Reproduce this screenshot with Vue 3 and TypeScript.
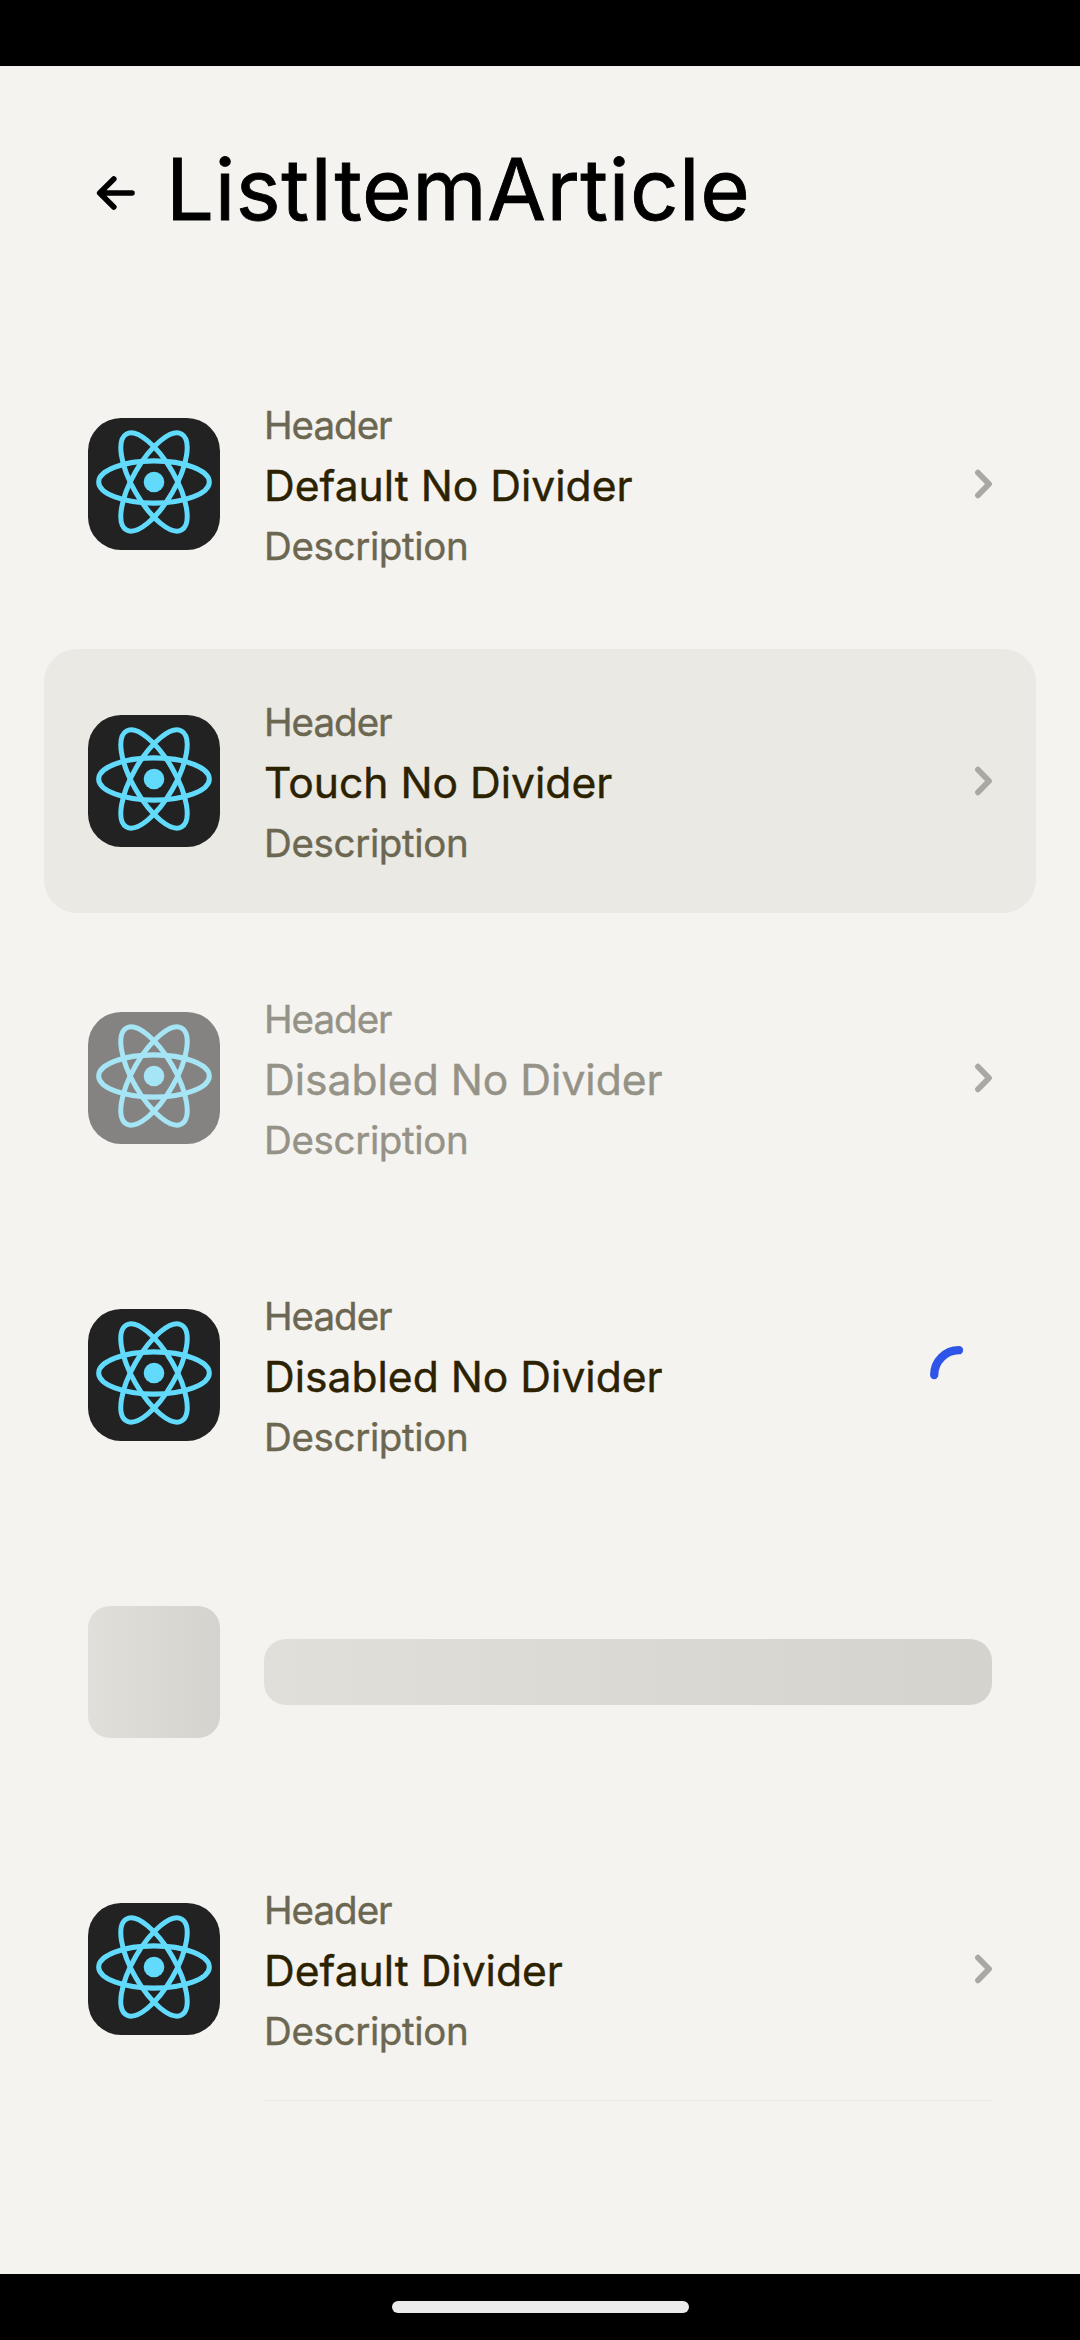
<script setup lang="ts">
type Trailing = 'chevron' | 'spinner'

interface Article {
  title: string
  kind: string
  trailing: Trailing
}

interface Skeleton {
  kind: 'skeleton'
}

const header = 'Header'
const description = 'Description'

const items: (Article | Skeleton)[] = [
  { title: 'Default No Divider', kind: 'default', trailing: 'chevron' },
  { title: 'Touch No Divider', kind: 'touch', trailing: 'chevron' },
  { title: 'Disabled No Divider', kind: 'disabled', trailing: 'chevron' },
  { title: 'Disabled No Divider', kind: 'default', trailing: 'spinner' },
  { kind: 'skeleton' },
  { title: 'Default Divider', kind: 'divided', trailing: 'chevron' },
]
</script>

<template>
  <div class="screen">
    <div class="status-bar"></div>
    <header class="top">
      <svg class="back" viewBox="0 0 66 66" width="66" height="66">
        <path d="M49 33H17M30.8 18.9L16.7 33L30.8 47.1" />
      </svg>
      <h1>ListItemArticle</h1>
    </header>
    <main class="list">
      <section v-for="(item, i) in items" :key="i" class="item" :class="item.kind">
        <template v-if="'title' in item">
          <div class="thumb">
            <svg viewBox="0 0 132 132" width="132" height="132">
              <g transform="translate(66 64) scale(5.03)">
                <circle r="2.05" fill="#61dafb" />
                <g fill="none" stroke="#61dafb">
                  <ellipse rx="11" ry="4.2" />
                  <ellipse rx="11" ry="4.2" transform="rotate(60)" />
                  <ellipse rx="11" ry="4.2" transform="rotate(120)" />
                </g>
              </g>
            </svg>
          </div>
          <div class="texts">
            <span class="small head">{{ header }}</span>
            <span class="title">{{ item.title }}</span>
            <span class="small desc">{{ description }}</span>
          </div>
          <svg v-if="item.trailing === 'chevron'" class="chevron" viewBox="0 0 18 30" width="18" height="30">
            <path d="M4 3.7L15 15L4 26.3" />
          </svg>
          <svg v-else class="spinner" viewBox="0 0 66 66" width="66" height="66">
            <path d="M8.2 33A24.8 24.8 0 0 1 33 8.2" />
          </svg>
        </template>
        <template v-else>
          <div class="bone square"></div>
          <div class="bone bar"></div>
        </template>
      </section>
    </main>
    <footer class="nav"><div class="pill"></div></footer>
  </div>
</template>

<style>
body {
  background: #f4f3ef;
}
</style>

<style scoped>
.screen {
  display: flex;
  flex-direction: column;
  width: 1080px;
  height: 2340px;
  background: #f4f3ef;
  font-family: Inter, sans-serif;
  overflow: hidden;
}
.status-bar {
  height: 66px;
  background: #000;
}
.top {
  display: flex;
  align-items: center;
  height: 286px;
  padding: 0 0 33px 83px;
  box-sizing: border-box;
}
.back {
  flex: none;
}
.back path {
  fill: none;
  stroke: #000;
  stroke-width: 5.6;
  stroke-linecap: round;
  stroke-linejoin: round;
}
h1 {
  margin: 0 0 6px 17px;
  font-size: 85px;
  font-weight: 400;
  line-height: 110px;
  letter-spacing: 0.6px;
  white-space: nowrap;
  color: #000;
  -webkit-text-stroke: 0.9px #000;
}
.list {
  flex: 1;
  display: flex;
  flex-direction: column;
  gap: 33px;
  padding: 0 44px;
}
.item {
  display: flex;
  align-items: center;
  height: 264px;
  padding: 0 44px;
  box-sizing: border-box;
  border-radius: 33px;
}
.touch {
  background: #eae9e4;
}
.thumb {
  width: 132px;
  height: 132px;
  border-radius: 33px;
  background: #222;
  overflow: hidden;
  flex: none;
}
.thumb svg {
  display: block;
}
.texts {
  flex: 1;
  display: flex;
  flex-direction: column;
  margin-left: 44px;
  padding-top: 4px;
  white-space: nowrap;
  -webkit-text-stroke-width: 0.4px;
}
.small {
  font-size: 38.5px;
  line-height: 55px;
  color: #6c6751;
}
.head {
  letter-spacing: -1px;
}
.desc {
  letter-spacing: -0.35px;
}
.title {
  font-size: 42.6px;
  line-height: 66px;
  color: #2c2200;
}
.disabled .thumb {
  opacity: 0.53;
}
.disabled .small,
.disabled .title {
  color: #959287;
}
.chevron path {
  fill: none;
  stroke: #aaa8a2;
  stroke-width: 5.8;
  stroke-linecap: round;
  stroke-linejoin: round;
}
.spinner path {
  fill: none;
  stroke: #2e54e8;
  stroke-width: 8.3;
  stroke-linecap: round;
}
.bone {
  border-radius: 22px;
  background: linear-gradient(90deg, #e0dfda, #d4d3cd);
}
.square {
  width: 132px;
  height: 132px;
}
.bar {
  flex: 1;
  height: 66px;
  margin-left: 44px;
}
.divided {
  border-radius: 0;
  background: linear-gradient(#e9e8e4, #e9e8e4) 220px 263px / 728px 1px no-repeat;
}
.nav {
  display: flex;
  justify-content: center;
  height: 66px;
  background: #000;
}
.pill {
  width: 297px;
  height: 12px;
  margin-top: 27px;
  border-radius: 6px;
  background: #ebebeb;
}
</style>
